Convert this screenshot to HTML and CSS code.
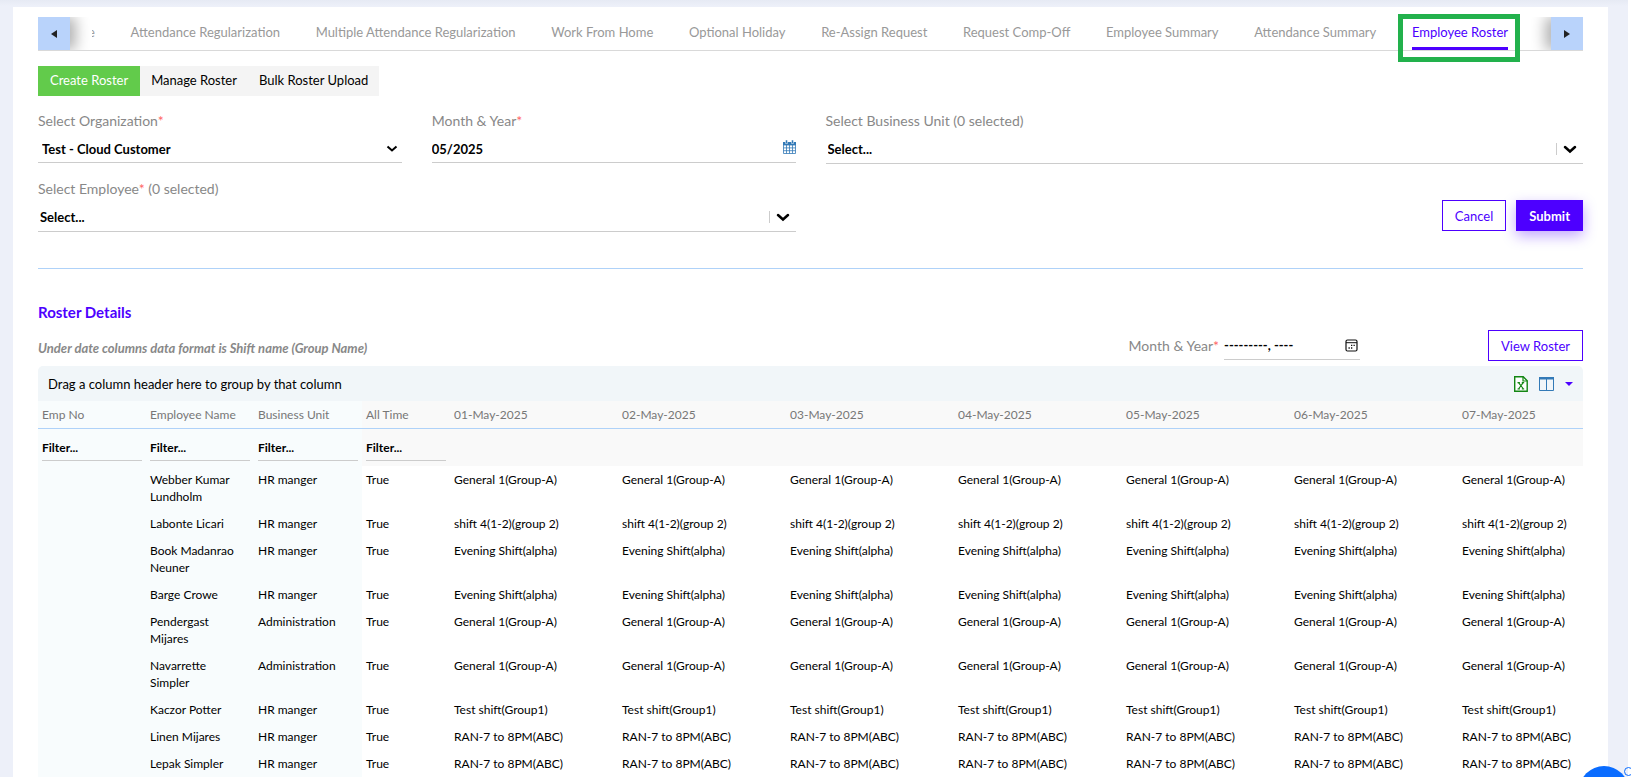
FILE: index.html
```html
<!DOCTYPE html>
<html lang="en">
<head>
<meta charset="utf-8">
<title>Employee Roster</title>
<link rel="stylesheet" href="styles.css">
</head>
<body>
<main class="panel">
  <nav class="tabs" aria-label="Attendance sections">
    <button class="tabs-arrow tabs-arrow-prev" type="button" aria-label="Previous tabs"><svg width="8" height="10" viewBox="0 0 8 10"><path d="M7 1v8L1 5z" fill="#222"/></svg></button>
    <div class="tabs-strip">
      <a class="tab tab-cut" href="#">e</a>
      <a class="tab" href="#">Attendance Regularization</a>
      <a class="tab" href="#">Multiple Attendance Regularization</a>
      <a class="tab" href="#">Work From Home</a>
      <a class="tab" href="#">Optional Holiday</a>
      <a class="tab" href="#">Re-Assign Request</a>
      <a class="tab" href="#">Request Comp-Off</a>
      <a class="tab" href="#">Employee Summary</a>
      <a class="tab" href="#">Attendance Summary</a>
      <a class="tab tab-active" href="#" aria-current="page">Employee Roster</a>
    </div>
    <button class="tabs-arrow tabs-arrow-next" type="button" aria-label="Next tabs"><svg width="8" height="10" viewBox="0 0 8 10"><path d="M1 1v8l6-4z" fill="#222"/></svg></button>
  </nav>

  <div class="modes">
    <button class="mode mode-active" type="button">Create Roster</button>
    <button class="mode" type="button">Manage Roster</button>
    <button class="mode" type="button">Bulk Roster Upload</button>
  </div>

  <form class="form">
    <div class="field">
      <label class="label" for="org">Select Organization<span class="req">*</span></label>
      <div class="control">
        <select id="org" class="input input-select"><option>Test - Cloud Customer</option></select>
        <svg class="chevron" width="12" height="8" viewBox="0 0 12 8"><path d="M1.500 1.500l4.500 4 4.500-4" fill="none" stroke="#000" stroke-width="2"/></svg>
      </div>
    </div>
    <div class="field">
      <label class="label" for="month">Month &amp; Year<span class="req">*</span></label>
      <div class="control">
        <input id="month" class="input" type="text" value="05/2025">
        <svg class="calendar" width="13" height="14" viewBox="0 0 13 14"><path d="M.5 2.500h12v11H.5zM.5 5h12M.5 7.900h12M.5 10.700h12M3.500 5v8.500M6.500 5v8.500M9.500 5v8.500" fill="none" stroke="#337ab7" stroke-width=".8"/><path d="M0 2h13v3H0z" fill="#337ab7"/><path d="M2.500 0h2v3.500h-2zM8.500 0h2v3.500h-2z" fill="#337ab7" stroke="#fff" stroke-width=".5"/></svg>
      </div>
    </div>
    <div class="field field-wide">
      <label class="label" for="unit">Select Business Unit (0 selected)</label>
      <div class="control control-multi">
        <select id="unit" class="input input-multi"><option>Select...</option></select>
        <span class="split"></span>
        <svg class="chevron-bold" width="14" height="9" viewBox="0 0 14 9"><path d="M2 2l5 4.500L12 2" fill="none" stroke="#000" stroke-width="2.500" stroke-linecap="round"/></svg>
      </div>
    </div>
    <div class="field field-wide">
      <label class="label" for="emp">Select Employee<span class="req">*</span> (0 selected)</label>
      <div class="control control-multi">
        <select id="emp" class="input input-multi"><option>Select...</option></select>
        <span class="split"></span>
        <svg class="chevron-bold" width="14" height="9" viewBox="0 0 14 9"><path d="M2 2l5 4.500L12 2" fill="none" stroke="#000" stroke-width="2.500" stroke-linecap="round"/></svg>
      </div>
    </div>
    <div class="actions">
      <button class="btn" type="button">Cancel</button>
      <button class="btn btn-primary" type="submit">Submit</button>
    </div>
  </form>

  <section class="details">
    <h2 class="details-title">Roster Details</h2>
    <div class="details-bar">
      <p class="note">Under date columns data format is Shift name (Group Name)</p>
      <label class="label" for="view-month">Month &amp; Year<span class="req">*</span></label>
      <div class="month-box">
        <input id="view-month" class="month-input" type="text" value="---------, ----">
        <svg width="13" height="13" viewBox="0 0 13 13"><rect x="1" y="1" width="11" height="11" rx="1.500" fill="none" stroke="#111" stroke-width="1.200"/><path d="M1 3.700h11" stroke="#111"/><path d="M6 6.300h1.300M8.500 6.300h1.300M3.500 9h1.300M6 9h1.300" stroke="#111" stroke-width="1.300"/></svg>
      </div>
      <button class="btn" type="button">View Roster</button>
    </div>

    <div class="toolbar">
      <span>Drag a column header here to group by that column</span>
      <div class="tools">
        <button class="tool" type="button" aria-label="Export to Excel"><svg width="14" height="16" viewBox="0 0 14 16"><path d="M.7.700h8.500l4 4v10.600H.7z" fill="#fff" stroke="#138613" stroke-width="1.400"/><path d="M9 .7V5h4.300" fill="none" stroke="#138613" stroke-width="1.200"/><path d="M4.500 6.700l5 6.300M9.200 6.700L4.500 13M3.500 6.700h2.400M7.800 6.700h2.400M3.500 13h2.400M7.800 13h2.400" fill="none" stroke="#138613" stroke-width="1.200"/></svg></button>
        <button class="tool" type="button" aria-label="Choose columns"><svg width="15" height="14" viewBox="0 0 15 14"><path d="M.5.500h14v13H.5zM7.500 1v12.500" fill="none" stroke="#337ab7"/><path d="M0 0h15v2.500H0z" fill="#337ab7"/></svg></button>
        <button class="tool" type="button" aria-label="More options"><svg width="8" height="4" viewBox="0 0 8 4"><path d="M0 0h8L4 4z" fill="#4d00ff"/></svg></button>
      </div>
    </div>

    <table class="grid">
      <colgroup><col class="col-fixed"><col class="col-fixed"><col class="col-fixed"><col class="col-time"><col class="col-day"><col class="col-day"><col class="col-day"><col class="col-day"><col class="col-day"><col class="col-day"><col></colgroup>
      <thead>
        <tr class="head"><th>Emp No</th><th>Employee Name</th><th>Business Unit</th><th>All Time</th><th>01-May-2025</th><th>02-May-2025</th><th>03-May-2025</th><th>04-May-2025</th><th>05-May-2025</th><th>06-May-2025</th><th>07-May-2025</th></tr>
        <tr class="filters">
          <td><input class="filter" type="text" aria-label="Filter Emp No" placeholder="Filter..."></td>
          <td><input class="filter" type="text" aria-label="Filter Employee Name" placeholder="Filter..."></td>
          <td><input class="filter" type="text" aria-label="Filter Business Unit" placeholder="Filter..."></td>
          <td><input class="filter" type="text" aria-label="Filter All Time" placeholder="Filter..."></td>
          <td></td><td></td><td></td><td></td><td></td><td></td><td></td>
        </tr>
      </thead>
      <tbody id="rows"></tbody>
    </table>
  </section>
</main>
<button class="chat" type="button" aria-label="Open chat"></button>
<span class="chat-mark" aria-hidden="true"></span>
<script src="roster.js"></script>
</body>
</html>
```

FILE: styles.css
```css
* { box-sizing: border-box; }
html { overflow: hidden; background: #fff; }
body {
  margin: 0 3px 0 0;
  padding: 7px 20px 0 13px;
  min-height: 100vh;
  background: linear-gradient(#e6eaf4, #edf0f9 6px);
  font: 13px/20px Lato, "Open Sans", sans-serif;
  color: #000;
}
button, input, select { font: inherit; color: inherit; }
button { cursor: pointer; }
.panel { background: #fff; padding: 10px 25px 0; min-height: calc(100vh - 7px); }

.tabs { display: flex; height: 34px; border-bottom: 1px solid #d9d9d9; }
.tabs-arrow { width: 32px; border: 0; padding: 0; background: #b9d3fb; flex: none; }
.tabs-arrow-prev { box-shadow: 6px 0 14px rgba(0, 0, 0, .3); clip-path: inset(0 -24px 0 0); }
.tabs-arrow-next { box-shadow: -6px 0 14px rgba(0, 0, 0, .3); clip-path: inset(0 0 0 -24px); }
.tabs-strip {
  flex: 1;
  display: flex;
  justify-content: space-between;
  margin: 0 22px;
  padding-right: 21px;
  min-width: 0;
  overflow-x: clip;
}
.tab { color: #999; text-decoration: none; white-space: nowrap; padding-top: 5px; height: 33px; }
.tab-cut { margin-left: -4px; }
.tab-active {
  position: relative;
  color: #4d00ff;
  border-bottom: 3px solid #4d00ff;
}
.tab-active::after {
  content: "";
  position: absolute;
  inset: -3px -12px -15px -14px;
  border: 5px solid #22b14c;
}

.modes { display: inline-flex; margin-top: 15px; background: #f4f4f4; vertical-align: top; }
.mode { border: 0; padding: 0 11px 2px; height: 30px; background: none; }
.mode-active { padding: 0 12px 2px; background: #62cb4b; color: #fff; }

.form {
  display: grid;
  grid-template-columns: repeat(4, minmax(0, 1fr));
  gap: 15px 30px;
  margin-top: 15px;
  padding-bottom: 36px;
  border-bottom: 1px solid #afd2f9;
}
.field-wide { grid-column: span 2; }
.label { display: block; color: #888; font-size: 14px; }
.req { color: #f66; }
.control { display: flex; align-items: center; height: 32px; border-bottom: 1px solid #ccc; }
.input {
  appearance: none;
  flex: 1;
  min-width: 0;
  border: 0;
  padding: 4px 0 0;
  background: none;
  font-weight: 700;
}
.input-select { padding-left: 4px; }
.input-multi { padding-left: 2px; }
.chevron { margin: 4px 4px 0 0; }
.control-multi { height: 33px; }
.split { width: 1px; height: 12px; background: #ccc; margin-top: 4px; }
.chevron-bold { margin: 4px 6px 0; }
.actions { grid-column: span 2; display: flex; justify-content: flex-end; gap: 10px; padding-top: 21px; }
.btn {
  height: 31px;
  padding: 0 12px;
  border: 1px solid #4d00ff;
  background: #fff;
  color: #4d00ff;
}
.btn-primary { background: #4d00ff; color: #fff; font-weight: 700; box-shadow: 0 5px 14px rgba(77, 0, 255, .35); }

.details-title { margin: 33px 0 8px; font-size: 15px; line-height: 20px; color: #4d00ff; }
.details-bar { display: flex; align-items: center; margin-bottom: 5px; }
.note { margin: 5px auto 0 0; font-style: italic; font-weight: 700; color: #888; }
.month-box {
  display: flex;
  align-items: center;
  width: 136px;
  height: 28px;
  margin: 0 128px 0 5px;
  padding-right: 2px;
  border-bottom: 1px solid #ccc;
}
.month-input { flex: 1; min-width: 0; border: 0; padding: 0; background: none; font-weight: 700; }

.toolbar {
  display: flex;
  align-items: center;
  justify-content: space-between;
  height: 35px;
  padding: 0 10px;
  background: #f1f6f9;
  border-radius: 5px 5px 0 0;
}
.tools { display: flex; align-items: center; gap: 11px; }
.tool { display: flex; border: 0; padding: 0; background: none; }

.grid { width: 100%; table-layout: fixed; border-collapse: collapse; font-size: 12px; line-height: 17px; }
.col-fixed { width: 108px; }
.col-time { width: 88px; }
.col-day { width: 168px; }
.grid th, .grid td { padding: 5px 4px; text-align: left; vertical-align: top; font-weight: 400; }
.grid tbody td { padding-right: 8px; }
.grid th { color: #777; border-bottom: 1px solid #afd2f9; }
.grid .filters td { padding: 8px 4px 5px; }
.grid thead tr { background: #f9f9f9; }
.grid tr > :nth-child(-n+3) { background: #f8fcfd; }
.filter { display: block; width: 100%; height: 24px; border: 0; border-bottom: 1px solid #ccc; padding: 0 0 2px; background: none; font-weight: 700; }
.filter::placeholder { color: #000; opacity: 1; }

.chat { position: fixed; right: 2px; bottom: -39px; width: 50px; height: 50px; border: 0; border-radius: 50%; background: #0a6cff; }
.chat-mark { position: fixed; right: -2px; bottom: 1px; width: 9px; height: 9px; border: 1px solid #0a6cff; border-radius: 50%; }
```

FILE: roster.js
```js
const employees = [
  ["Webber Kumar Lundholm", "HR manger", "General 1(Group-A)"],
  ["Labonte Licari", "HR manger", "shift 4(1-2)(group 2)"],
  ["Book Madanrao Neuner", "HR manger", "Evening Shift(alpha)"],
  ["Barge Crowe", "HR manger", "Evening Shift(alpha)"],
  ["Pendergast Mijares", "Administration", "General 1(Group-A)"],
  ["Navarrette Simpler", "Administration", "General 1(Group-A)"],
  ["Kaczor Potter", "HR manger", "Test shift(Group1)"],
  ["Linen Mijares", "HR manger", "RAN-7 to 8PM(ABC)"],
  ["Lepak Simpler", "HR manger", "RAN-7 to 8PM(ABC)"]
];

const body = document.getElementById("rows");
for (const [name, unit, shift] of employees) {
  const row = body.insertRow();
  for (const text of ["", name, unit, "True", ...Array(7).fill(shift)]) {
    row.insertCell().textContent = text;
  }
}
```
